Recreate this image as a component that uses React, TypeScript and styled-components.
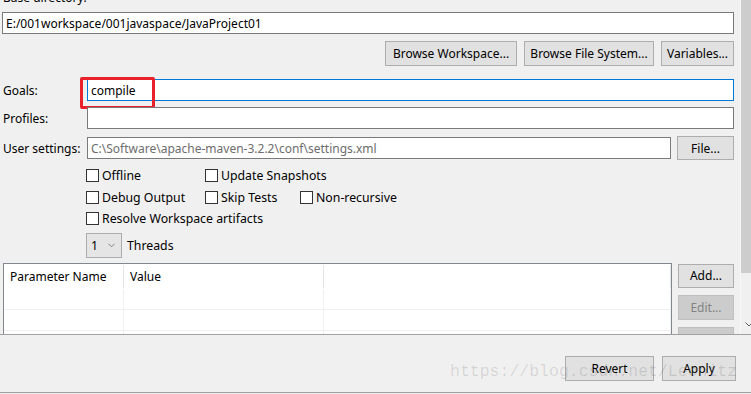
import * as React from 'react';
import styled, { createGlobalStyle } from 'styled-components';

const GlobalStyle = createGlobalStyle`
  html, body {
    margin: 0;
    padding: 0;
    background: #f0f0f0;
  }
  body {
    font-family: "Noto Sans", "Liberation Sans", sans-serif;
    font-size: 12px;
    color: #000;
  }
`;

const Page = styled.div`
  width: 751px;
  height: 394px;
  overflow: hidden;
  display: flex;
  flex-direction: column;
  background: #f0f0f0;
`;

const ScrollPane = styled.div`
  height: 335px;
  box-sizing: border-box;
  border-bottom: 1px solid #a0a0a0;
  display: flex;
  overflow: hidden;
`;

const Content = styled.div`
  width: 740px;
  box-sizing: border-box;
  padding: 0 6px 0 2px;
  display: flex;
  flex-direction: column;
  overflow: hidden;
`;

const CutLabel = styled.div`
  margin-top: -10px;
  height: 16px;
  line-height: 16px;
  padding-left: 1px;
`;

const Row = styled.div<{ $top: number }>`
  margin-top: ${(p) => p.$top}px;
  display: flex;
  align-items: center;
  gap: 6px;
`;

const Label = styled.div`
  width: 78px;
  padding-left: 1px;
  flex-shrink: 0;
  white-space: nowrap;
`;

const Field = styled.div<{ $focus?: boolean; $muted?: boolean }>`
  position: relative;
  flex: 1;
  height: 22px;
  box-sizing: border-box;
  border: 1px solid ${(p) => (p.$focus ? '#0078d7' : '#7a7a7a')};
  background: #fff;
  padding: 0 3px;
  display: flex;
  align-items: center;
  white-space: nowrap;
  color: ${(p) => (p.$muted ? '#6d6d6d' : '#000')};
`;

const Highlight = styled.div`
  position: absolute;
  left: -8px;
  top: -3px;
  width: 75px;
  height: 32px;
  box-sizing: border-box;
  border: 3px solid #e8212b;
  border-radius: 2px;
  pointer-events: none;
`;

const ButtonRow = styled.div<{ $top: number }>`
  margin-top: ${(p) => p.$top}px;
  display: flex;
  justify-content: flex-end;
  gap: 7px;
`;

const Button = styled.div<{ $w: number; $h?: number; $disabled?: boolean }>`
  width: ${(p) => p.$w}px;
  height: ${(p) => p.$h ?? 25}px;
  flex-shrink: 0;
  box-sizing: border-box;
  border: 1px solid ${(p) => (p.$disabled ? '#bfbfbf' : '#adadad')};
  background: ${(p) => (p.$disabled ? '#cccccc' : '#e1e1e1')};
  color: ${(p) => (p.$disabled ? '#838383' : '#000')};
  display: flex;
  align-items: center;
  justify-content: center;
  white-space: nowrap;
`;

const Options = styled.div`
  margin: 5px 0 0 84px;
  display: grid;
  grid-template-columns: 119px 95px auto;
  grid-auto-rows: 21.5px;
  align-items: center;
  justify-items: start;
  font-size: 12.3px;
`;

const Check = styled.label<{ $span?: number }>`
  display: flex;
  align-items: center;
  gap: 3px;
  white-space: nowrap;
  grid-column: span ${(p) => p.$span ?? 1};
`;

const Box = styled.span`
  width: 13px;
  height: 13px;
  box-sizing: border-box;
  border: 1px solid #333;
  background: #fff;
`;

const ThreadsRow = styled.div`
  margin: 3px 0 0 84px;
  display: flex;
  align-items: center;
  gap: 5px;
  font-size: 12.3px;
`;

const Combo = styled.div`
  width: 36px;
  height: 25px;
  box-sizing: border-box;
  border: 1px solid #adadad;
  background: #e5e5e5;
  display: flex;
  align-items: center;
  justify-content: space-between;
  padding: 0 6px 0 4px;
`;

const TableArea = styled.div`
  margin-top: 5px;
  display: flex;
  gap: 6px;
  align-items: flex-start;
`;

const Table = styled.div`
  margin-left: 1px;
  flex: 1;
  height: 120px;
  box-sizing: border-box;
  border: 1px solid #828790;
  background: #fff;
  display: grid;
  grid-template-columns: 120px 200px 1fr;
  grid-template-rows: 25px 21px 21px 21px;
`;

const HeadCell = styled.div`
  padding-left: 6px;
  display: flex;
  align-items: center;
  border-right: 1px solid #e5e5e5;
  margin: 1px 0 1px;
`;

const Cell = styled.div`
  border-right: 1px solid #f0f0f0;
  border-bottom: 1px solid #f0f0f0;
`;

const SideButtons = styled.div`
  margin-top: 1px;
  display: flex;
  flex-direction: column;
  gap: 7px;
`;

const ScrollBar = styled.div`
  width: 11px;
  box-sizing: border-box;
  border-left: 1px solid #f7f7f7;
  display: flex;
  flex-direction: column;
  overflow: hidden;
`;

const Thumb = styled.div`
  height: 273px;
  background: #cdcdcd;
`;

const Track = styled.div`
  flex: 1;
  background: #f0f0f0;
  display: flex;
  align-items: flex-end;
  padding: 0 0 7px 4px;
`;

const BottomBar = styled.div`
  position: relative;
  height: 58px;
  box-sizing: border-box;
  border-bottom: 1px solid #a0a0a0;
  padding: 21px 15px 0 0;
  display: flex;
  justify-content: flex-end;
  gap: 8px;
`;

const Watermark = styled.div`
  position: absolute;
  left: 450px;
  top: 28px;
  font-family: "Liberation Mono", "DejaVu Sans Mono", monospace;
  font-size: 16.5px;
  line-height: 17px;
  color: rgba(0, 0, 0, 0.12);
  white-space: nowrap;
  pointer-events: none;
`;

const Chevron = ({ w = 8, color = '#606060' }: { w?: number; color?: string }) => (
  <svg width={w} height={5} viewBox="0 0 8 5" style={{ flexShrink: 0 }}>
    <path d="M0.5 0.5 L4 4 L7.5 0.5" fill="none" stroke={color} strokeWidth="1" />
  </svg>
);

export default function App() {
  return (
    <Page>
      <GlobalStyle />
      <ScrollPane>
        <Content>
          <CutLabel>Base directory:</CutLabel>
          <Row $top={6}>
            <Field>E:/001workspace/001javaspace/JavaProject01</Field>
          </Row>
          <ButtonRow $top={7}>
            <Button $w={132}>Browse Workspace...</Button>
            <Button $w={130}>Browse File System...</Button>
            <Button $w={73}>Variables...</Button>
          </ButtonRow>
          <Row $top={13}>
            <Label>Goals:</Label>
            <Field $focus>
              compile
              <Highlight />
            </Field>
          </Row>
          <Row $top={6}>
            <Label>Profiles:</Label>
            <Field />
          </Row>
          <Row $top={7}>
            <Label>User settings:</Label>
            <Field $muted>C:\Software\apache-maven-3.2.2\conf\settings.xml</Field>
            <Button $w={57} $h={24}>File...</Button>
          </Row>
          <Options>
            <Check><Box />Offline</Check>
            <Check $span={2}><Box />Update Snapshots</Check>
            <Check><Box />Debug Output</Check>
            <Check><Box />Skip Tests</Check>
            <Check><Box />Non-recursive</Check>
            <Check $span={3}><Box />Resolve Workspace artifacts</Check>
          </Options>
          <ThreadsRow>
            <Combo>
              <span>1</span>
              <Chevron w={7} color="#707070" />
            </Combo>
            <span>Threads</span>
          </ThreadsRow>
          <TableArea>
            <Table>
              <HeadCell>Parameter Name</HeadCell>
              <HeadCell>Value</HeadCell>
              <HeadCell />
              {Array.from({ length: 9 }).map((_, i) => (
                <Cell key={i} />
              ))}
            </Table>
            <SideButtons>
              <Button $w={56} $h={24}>Add...</Button>
              <Button $w={56} $disabled>Edit...</Button>
              <Button $w={56} $disabled>Remove</Button>
            </SideButtons>
          </TableArea>
        </Content>
        <ScrollBar>
          <Thumb />
          <Track>
            <Chevron />
          </Track>
        </ScrollBar>
      </ScrollPane>
      <BottomBar>
        <Button $w={89}>Revert</Button>
        <Button $w={74}>Apply</Button>
        <Watermark>https://blog.csdn.net/Leonitz</Watermark>
      </BottomBar>
    </Page>
  );
}
